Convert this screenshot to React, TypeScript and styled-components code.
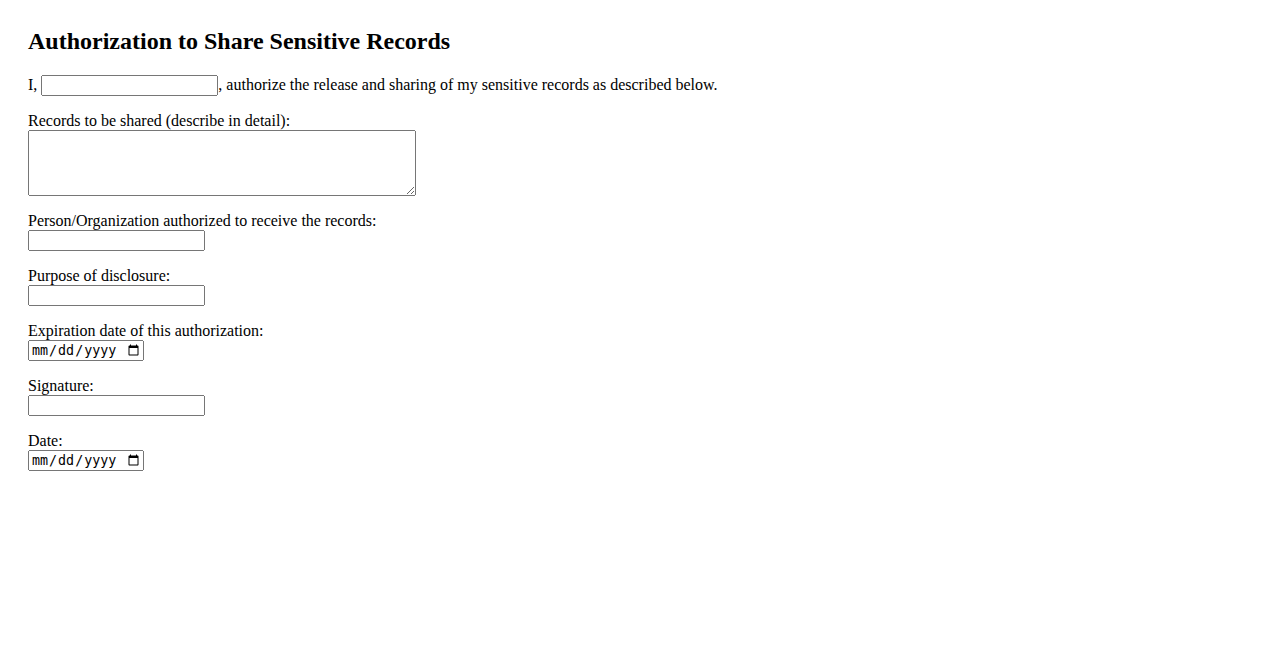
import styled, { createGlobalStyle } from "styled-components";

const GlobalStyle = createGlobalStyle`
  body {
    margin: 0;
    background: #fff;
    color: #000;
    font-family: "Liberation Serif", "Times New Roman", serif;
    font-size: 16px;
  }
`;

const Page = styled.form`
  padding: 28px;
`;

const Title = styled.h2`
  margin: 0 0 20px;
  font-size: 24px;
  font-weight: bold;
`;

const Field = styled.p`
  margin: 0 0 16px;
`;

const TextInput = styled.input`
  width: 177px;
  height: 21px;
  box-sizing: border-box;
`;

const DateInput = styled.input`
  width: 116px;
  height: 21px;
  box-sizing: border-box;
`;

const Details = styled.textarea`
  width: 388px;
  height: 66px;
  box-sizing: border-box;
  vertical-align: bottom;
`;

const fields: { label: string; type: "text" | "date" }[] = [
  { label: "Person/Organization authorized to receive the records:", type: "text" },
  { label: "Purpose of disclosure:", type: "text" },
  { label: "Expiration date of this authorization:", type: "date" },
  { label: "Signature:", type: "text" },
  { label: "Date:", type: "date" },
];

export default function App() {
  return (
    <>
      <GlobalStyle />
      <Page onSubmit={(e) => e.preventDefault()}>
        <Title>Authorization to Share Sensitive Records</Title>
        <Field>
          I, <TextInput type="text" />, authorize the release and sharing of my
          sensitive records as described below.
        </Field>
        <Field>
          <label>Records to be shared (describe in detail):</label>
          <br />
          <Details />
        </Field>
        {fields.map((f) => (
          <Field key={f.label}>
            <label>{f.label}</label>
            <br />
            {f.type === "date" ? <DateInput type="date" /> : <TextInput type="text" />}
          </Field>
        ))}
      </Page>
    </>
  );
}
